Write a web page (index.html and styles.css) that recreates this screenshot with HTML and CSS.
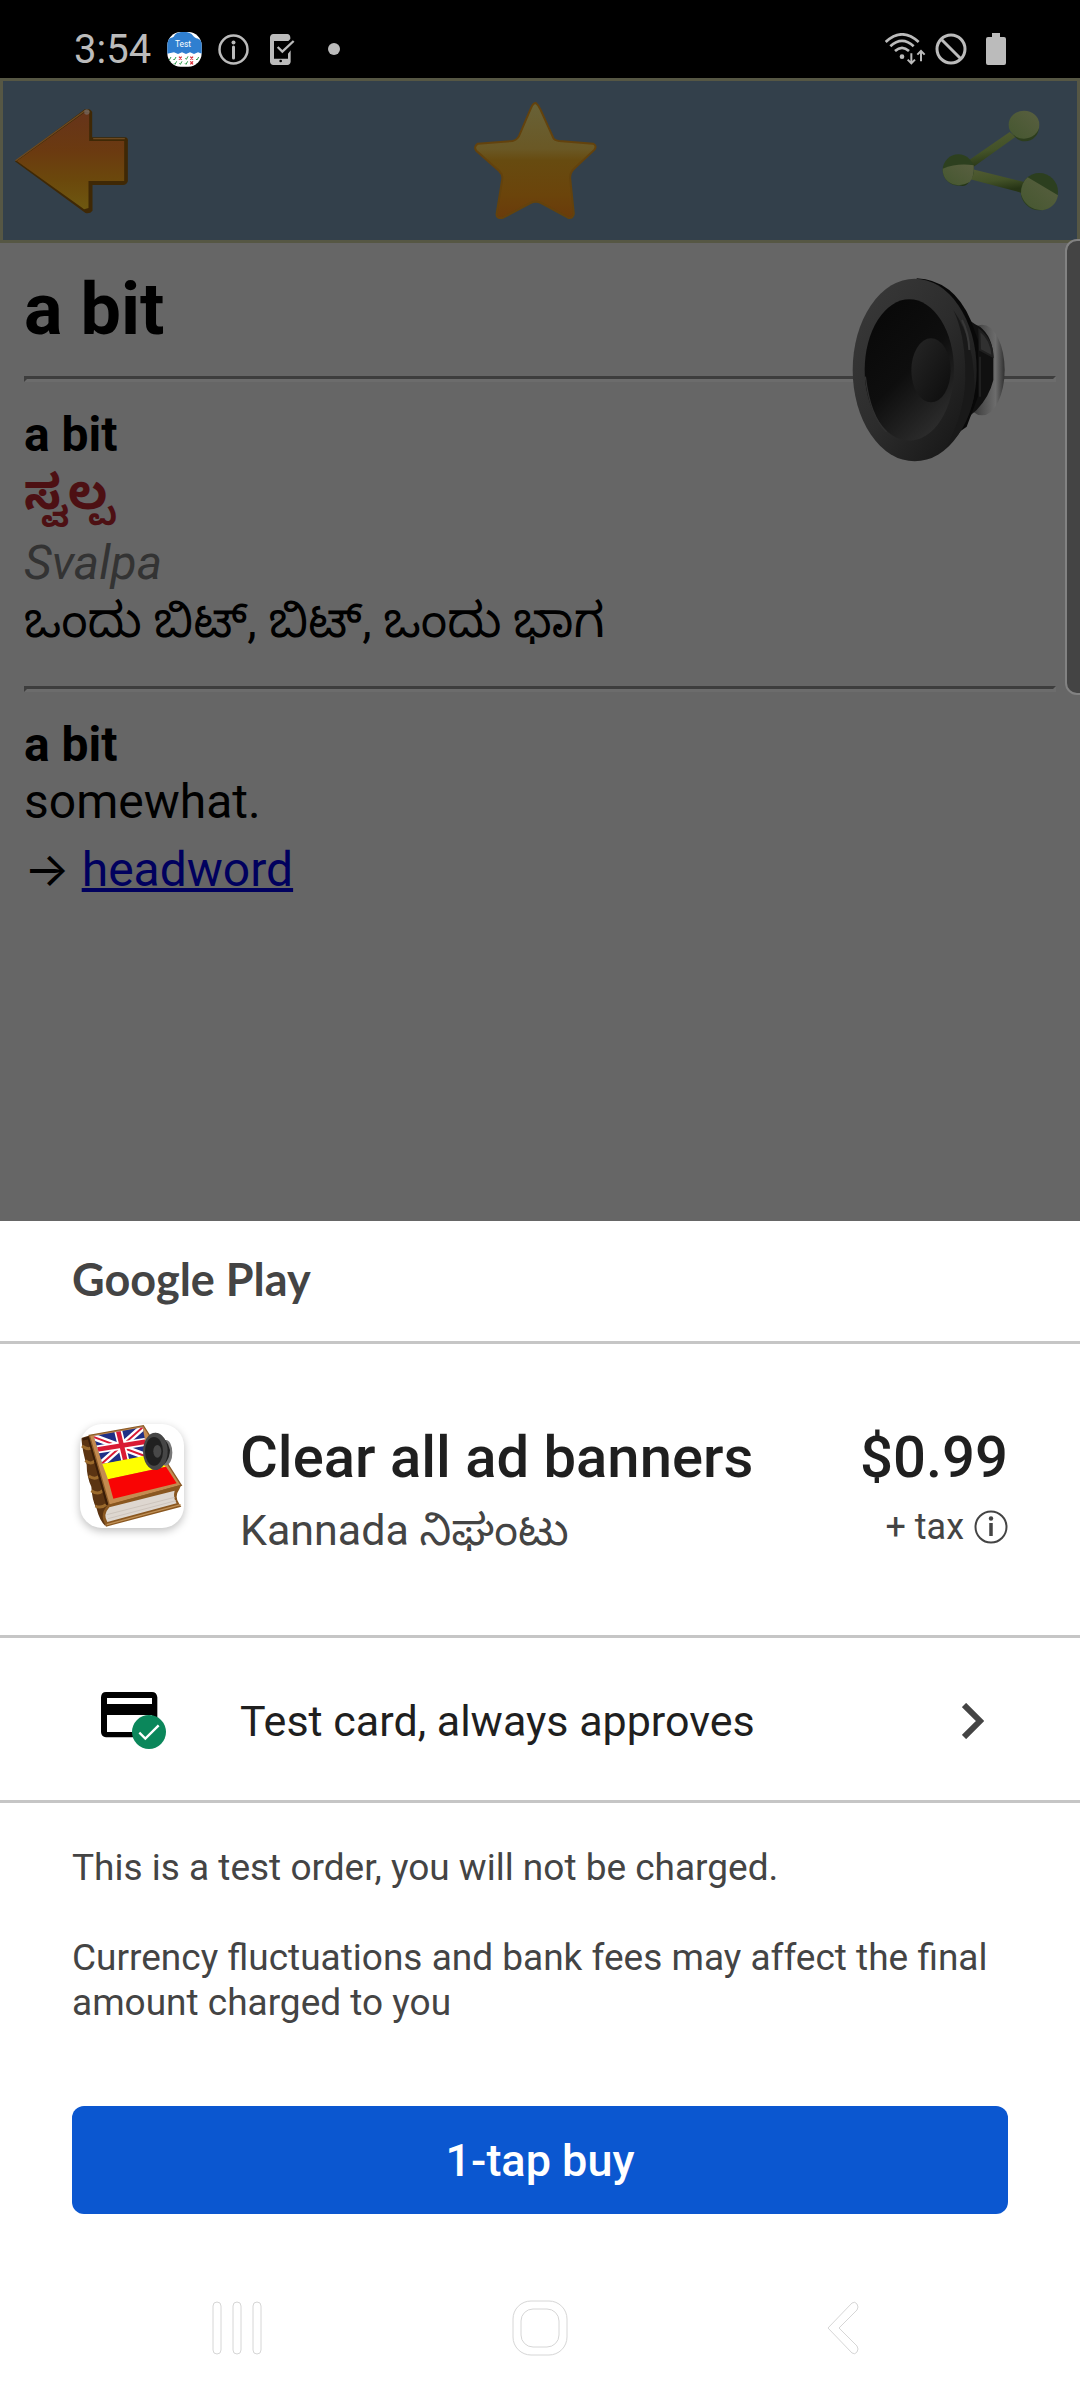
FILE: index.html
```html
<!DOCTYPE html>
<html lang="en">

<head>
    <meta charset="UTF-8">
    <meta name="viewport" content="width=device-width, initial-scale=1.0">
    <title>Kannada Dictionary</title>
    <link rel="stylesheet" href="styles.css">
</head>

<body>
    <div class="statusbar">
        <span class="clock">3:54</span>
        <svg width="35" height="35" viewBox="499 95 105 105">
            <clipPath id="badge"><rect x="500" y="95" width="103" height="104" rx="40" /></clipPath>
            <g clip-path="url(#badge)">
                <rect x="499" y="95" width="105" height="105" fill="#fff" />
                <path d="M499 160V122C506 108 518 117 522 104C530 92 566 90 576 105C584 118 598 112 604 126V160L592 156 580 161 568 156 556 161 544 156 532 161 520 156Z" fill="#2f7fd0" />
                <text x="547" y="141" class="badge-text">Test</text>
                <path d="M503 176l3 3 5-9M518 176l3 3 5-9M554 174l3 3 5-9M586 176l3 3 5-9M502 189l3 3 5-9M520 189l3 3 5-9M536 189l3 3 5-9M553 189l3 3 5-9M588 189l3 3 5-9" fill="none" stroke="#2c9a4b" stroke-width="3" />
                <path d="M535 169l8 9m0-9l-8 9M569 169l8 9m0-9l-8 9M569 183l8 9m0-9l-8 9" stroke="#d8303a" stroke-width="4" />
            </g>
        </svg>
        <svg width="31" height="31" viewBox="0 0 31 31">
            <circle cx="15.500" cy="15.500" r="14" fill="none" stroke="#bbb" stroke-width="2.500" />
            <path d="M15.500 13v11" stroke="#bbb" stroke-width="3" stroke-linecap="round" />
            <circle cx="15.500" cy="8.500" r="2" fill="#bbb" />
        </svg>
        <svg width="35" height="31" viewBox="797 101 105 93">
            <path d="M822 101H864Q872 102 873 111V116L867 122H824V175H866V160L874 150V184Q873 193 864 194H822Q813 193 812 184V111Q813 102 822 101Z" fill="#bbb" />
            <path d="M835 140L849 154 883 122" fill="none" stroke="#bbb" stroke-width="7" />
            <circle cx="844" cy="182" r="4" fill="#000" />
        </svg>
        <span class="dot"></span>
        <div class="status-right">
            <svg width="41" height="32" viewBox="135 99 123 96">
                <g fill="none" stroke="#bbb" stroke-width="8">
                    <path d="M137 126Q186 80 236 126" />
                    <path d="M151 139Q186 106 221 139" />
                    <path d="M165 153Q186 134 207 153" />
                    <path d="M214 160V188M203 179L214 190 225 179M243 184V154M232 164L243 153 254 164" stroke-width="6" />
                </g>
                <circle cx="186" cy="170" r="7" fill="#bbb" />
            </svg>
            <svg width="32" height="32" viewBox="0 0 32 32">
                <circle cx="16" cy="16" r="14" fill="none" stroke="#bbb" stroke-width="3" />
                <path d="M6 6L26 26" stroke="#bbb" stroke-width="3" />
            </svg>
            <svg class="battery" width="20" height="32" viewBox="0 0 20 32">
                <path d="M6 0h8v4h4q2 0 2 2v24q0 2-2 2H2q-2 0-2-2V6q0-2 2-2h4Z" fill="#bbb" />
            </svg>
        </div>
    </div>

    <header class="toolbar">
        <button type="button" aria-label="Back">
            <svg width="115" height="106" viewBox="40 320 344 318">
                <defs>
                    <linearGradient id="arrow" x1="0" y1="0" x2="0" y2="1">
                        <stop offset="0" stop-color="#66341a" />
                        <stop offset="0.4" stop-color="#6b3a10" />
                        <stop offset="0.7" stop-color="#6b480c" />
                        <stop offset="1" stop-color="#6e5810" />
                    </linearGradient>
                </defs>
                <path d="M42 480L252 324Q268 320 274 332V408H374Q383 410 381 422V540Q378 551 366 551H275V628Q268 638 254 635Z" fill="#3f2805" />
                <path d="M48 479L250 334 265 336V419H370V539H263V620L250 624Z" fill="url(#arrow)" />
                <path d="M44 478L252 328 266 332M277 412H372" fill="none" stroke="#6d4a22" stroke-width="4" />
                <circle cx="258" cy="332" r="8" fill="#75665c" opacity="0.8" />
            </svg>
        </button>
        <button type="button" aria-label="Favorite">
            <svg width="125" height="120" viewBox="222 86 374 360">
                <defs>
                    <linearGradient id="star" x1="0" y1="0" x2="0" y2="1">
                        <stop offset="0" stop-color="#686238" />
                        <stop offset="0.4" stop-color="#6a5825" />
                        <stop offset="0.5" stop-color="#674b10" />
                        <stop offset="0.8" stop-color="#6b440b" />
                        <stop offset="1" stop-color="#6a3b0b" />
                    </linearGradient>
                </defs>
                <path d="M410 92Q418 98 424 112L462 196Q464 203 480 206L582 214Q594 220 586 232L524 290Q512 302 513 318L524 424Q522 440 506 436L426 392Q410 384 394 392L312 436Q292 440 292 426L309 322Q312 308 300 296L232 236Q222 224 236 214L340 206Q354 203 360 190L396 106Q402 92 410 92Z" fill="url(#star)" stroke="#63420d" stroke-width="6" />
            </svg>
        </button>
        <button type="button" aria-label="Share">
            <svg width="117" height="102" viewBox="303 324 351 306">
                <defs>
                    <linearGradient id="stem" x1="0" y1="0" x2="0.3" y2="1">
                        <stop offset="0" stop-color="#535c34" />
                        <stop offset="0.6" stop-color="#435228" />
                        <stop offset="1" stop-color="#263415" />
                    </linearGradient>
                    <linearGradient id="ball" x1="0" y1="1" x2="1" y2="0">
                        <stop offset="0" stop-color="#455730" />
                        <stop offset="1" stop-color="#595f40" />
                    </linearGradient>
                </defs>
                <ellipse cx="365" cy="512" rx="27" ry="40" fill="#263617" />
                <path d="M376 480L506 390 524 404 394 497Z" fill="url(#stem)" />
                <path d="M380 498L550 540 540 572 382 530Z" fill="url(#stem)" />
                <ellipse cx="552" cy="374" rx="42" ry="44" fill="#2d3e1d" />
                <ellipse cx="549" cy="368" rx="46" ry="42" fill="url(#ball)" />
                <circle cx="352" cy="504" r="47" fill="#2d401f" />
                <path d="M305 500Q350 482 398 490Q400 526 386 540Q350 560 320 538Q304 522 305 500Z" fill="url(#ball)" />
                <circle cx="595" cy="569" r="56" fill="#2c3f1f" />
                <path d="M560 526L651 580Q644 618 604 625Q554 622 540 576Q540 542 560 526Z" fill="url(#ball)" />
            </svg>
        </button>
    </header>

    <main class="entry">
        <h1>a bit</h1>
        <hr>
        <p class="word">a bit</p>
        <p class="kannada translation" lang="kn">ಸ್ವಲ್ಪ</p>
        <p class="translit">Svalpa</p>
        <p class="kannada" lang="kn">ಒಂದು ಬಿಟ್, ಬಿಟ್, ಒಂದು ಭಾಗ</p>
        <hr>
        <p class="word">a bit</p>
        <p>somewhat.</p>
        <p class="see-also"><span class="arrow">→</span> <a href="#headword">headword</a></p>

        <button type="button" class="speaker" aria-label="Listen">
            <svg width="154" height="184" viewBox="96 144 462 552">
                <defs>
                    <linearGradient id="magnet" x1="0" y1="0" x2="1" y2="0">
                        <stop offset="0" stop-color="#111" />
                        <stop offset="0.5" stop-color="#4e4e4e" />
                        <stop offset="0.8" stop-color="#6c6c6c" />
                        <stop offset="1" stop-color="#303030" />
                    </linearGradient>
                    <linearGradient id="rim" x1="0" y1="0" x2="1" y2="1">
                        <stop offset="0" stop-color="#3a3a3a" />
                        <stop offset="0.5" stop-color="#2c2c2c" />
                        <stop offset="1" stop-color="#121212" />
                    </linearGradient>
                    <linearGradient id="cone" x1="0.2" y1="0" x2="0.8" y2="1">
                        <stop offset="0" stop-color="#080808" />
                        <stop offset="0.5" stop-color="#0e0e0e" />
                        <stop offset="1" stop-color="#303030" />
                    </linearGradient>
                    <linearGradient id="cap" x1="0" y1="0" x2="1" y2="1">
                        <stop offset="0" stop-color="#262626" />
                        <stop offset="1" stop-color="#0c0c0c" />
                    </linearGradient>
                </defs>
                <ellipse cx="486" cy="420" rx="68" ry="136" fill="url(#magnet)" />
                <path d="M400 220Q450 280 480 290Q518 320 520 380V450Q508 500 470 540L400 600Z" fill="#101010" />
                <path d="M478 300Q516 330 518 380L480 360ZM480 380V500" fill="#303030" stroke="#1f1f1f" stroke-width="6" />
                <path d="M290 145Q400 150 452 270L474 330V500L440 590L300 690Z" fill="#080808" />
                <ellipse cx="284" cy="420" rx="186" ry="274" fill="url(#rim)" />
                <path d="M400 240Q470 340 462 500Q440 600 380 650Q440 540 436 420Q434 310 400 240Z" fill="#191919" />
                <path d="M426 270Q446 310 448 360" fill="none" stroke="#383838" stroke-width="6" />
                <ellipse cx="268" cy="420" rx="134" ry="212" fill="url(#cone)" />
                <path d="M136 440Q150 560 200 606" fill="none" stroke="#303030" stroke-width="4" />
                <ellipse cx="333" cy="421" rx="59" ry="96" fill="url(#cap)" />
            </svg>
        </button>
        <div class="edge-panel"></div>
    </main>

    <section class="sheet">
        <div class="brand">Google Play</div>

        <div class="product">
            <div class="lead">
                <svg class="app-icon" width="104" height="104" viewBox="242 642 312 312">
                    <defs>
                        <clipPath id="flag"><path d="M283 678L430 652 446 740 309 761Z" /></clipPath>
                    </defs>
                    <path d="M246 684L272 676 330 886 318 948Q300 930 292 896Q278 872 276 830Q262 800 262 764Q250 730 246 684Z" fill="#5b3412" />
                    <path d="M248 708Q268 722 276 712M258 752Q276 766 286 752M268 798Q286 810 298 800M276 842Q296 856 310 842M288 888Q306 896 320 884" fill="none" stroke="#9b6a2c" stroke-width="9" />
                    <path d="M250 688L268 684 324 884" fill="none" stroke="#3a1d08" stroke-width="7" />
                    <path d="M270 676L432 647 546 826 330 886Z" fill="#c48b50" stroke="#8c5c28" stroke-width="4" />
                    <path d="M326 884L546 824 540 838Q524 860 540 882L546 890 320 950 314 936Q302 910 326 884Z" fill="#8a5720" />
                    <path d="M330 892L526 842Q520 862 532 880L324 936Q310 914 330 892Z" fill="#ded7d0" />
                    <path d="M322 914L526 862M326 926L530 872" stroke="#cdc4bc" stroke-width="3" />
                    <path d="M322 944L544 884" stroke="#c09158" stroke-width="4" />
                    <g clip-path="url(#flag)">
                        <path d="M280 650H450V765H280Z" fill="#1f2f86" />
                        <path d="M280 680L448 742M430 652L306 762" stroke="#fff" stroke-width="20" />
                        <path d="M280 680L448 742M430 652L306 762" stroke="#d91a34" stroke-width="6" />
                        <path d="M356 660L380 760M284 720L446 694" stroke="#fff" stroke-width="24" />
                        <path d="M356 660L380 760M284 720L446 694" stroke="#d91a34" stroke-width="14" />
                    </g>
                    <path d="M309 762L446 736 500 770 326 808Z" fill="#ff0" />
                    <path d="M326 808L500 770 532 820 342 866Z" fill="#f90404" />
                    <ellipse cx="500" cy="728" rx="19" ry="38" fill="#777" />
                    <path d="M468 668Q500 676 512 720Q510 762 470 780Z" fill="#222" />
                    <ellipse cx="468" cy="724" rx="37" ry="56" fill="#464646" />
                    <ellipse cx="464" cy="724" rx="27" ry="43" fill="#202020" />
                    <ellipse cx="474" cy="724" rx="12" ry="19" fill="#484848" />
                </svg>
            </div>
            <div class="product-text">
                <h2>Clear all ad banners</h2>
                <p>Kannada <span lang="kn">ನಿಘಂಟು</span></p>
            </div>
            <div class="price">
                <strong>$0.99</strong>
                <p>
                    + tax
                    <button type="button" aria-label="Tax details">
                        <svg width="34" height="34" viewBox="0 0 34 34">
                            <circle cx="17" cy="17" r="15.500" fill="none" stroke="#444" stroke-width="2" />
                            <path d="M17 13v13" stroke="#444" stroke-width="3.500" />
                            <circle cx="17" cy="8.500" r="2.200" fill="#444" />
                        </svg>
                    </button>
                </p>
            </div>
        </div>

        <button type="button" class="payment">
            <span class="lead">
                <svg width="65" height="57" viewBox="123 108 195 171">
                    <path d="M138 108H276Q290 108 292 124V228Q290 243 276 244H138Q124 243 123 228V124Q124 108 138 108ZM141 126V144H276V126ZM141 177V228H276V177Z" fill="#000" fill-rule="evenodd" />
                    <circle cx="267" cy="228" r="51" fill="#0b875b" />
                    <path d="M238 230L256 248 296 208" fill="none" stroke="#fff" stroke-width="7" />
                </svg>
            </span>
            <span class="payment-name">Test card, always approves</span>
            <svg class="chevron" width="22" height="36" viewBox="0 0 22 36">
                <path d="M2 2L18 18 2 34" fill="none" stroke="#444" stroke-width="6" />
            </svg>
        </button>

        <div class="checkout">
            <p>This is a test order, you will not be charged.</p>
            <p>Currency fluctuations and bank fees may affect the final amount charged to you</p>
            <button type="button" class="buy">1-tap buy</button>
        </div>

        <nav class="navbar">
            <button type="button" aria-label="Recent apps">
                <svg width="50" height="54" viewBox="0 0 50 54" fill="none" stroke="#d6d6d6">
                    <rect x="1" y="1" width="8" height="52" rx="4" />
                    <rect x="21" y="1" width="8" height="52" rx="4" />
                    <rect x="41" y="1" width="8" height="52" rx="4" />
                </svg>
            </button>
            <button type="button" aria-label="Home">
                <svg width="56" height="56" viewBox="0 0 56 56" fill="none" stroke="#d6d6d6">
                    <rect x="1" y="1" width="54" height="54" rx="18" />
                    <rect x="9" y="9" width="38" height="38" rx="12" />
                </svg>
            </button>
            <button type="button" aria-label="Back">
                <svg width="32" height="54" viewBox="0 0 32 54" fill="none" stroke="#d6d6d6">
                    <path d="M1 27L25 2Q28 0 30 3Q32 6 30 9L12 27 30 45Q32 48 30 51Q28 54 25 52Z" />
                </svg>
            </button>
        </nav>
    </section>
</body>

</html>
```
FILE: styles.css
```css
* {
    box-sizing: border-box;
}

html {
    overflow-x: hidden;
}

body {
    margin: 0;
    min-height: 100vh;
    display: flex;
    flex-direction: column;
    background-color: #666;
    font-family: Roboto, "Noto Sans Kannada", sans-serif;
}

h1,
h2,
p {
    margin: 0;
}

svg {
    display: block;
    flex-shrink: 0;
}

button {
    border: 0;
    padding: 0;
    background: none;
    color: inherit;
    font: inherit;
    cursor: pointer;
}

/* status bar */
.statusbar {
    height: 78px;
    padding: 20px 74px 0;
    display: flex;
    align-items: center;
    background-color: #000;
    color: #bbb;
}

.clock {
    font-size: 40px;
    margin-right: 16px;
}

.statusbar > svg {
    margin-right: 16px;
}

.badge-text {
    font-size: 25px;
    fill: #fff;
    text-anchor: middle;
}

.dot {
    width: 12px;
    height: 12px;
    margin-left: 12px;
    border-radius: 50%;
    background-color: #bbb;
}

.status-right {
    margin-left: auto;
    display: flex;
    gap: 9px;
}

.battery {
    margin-left: 10px;
}

/* toolbar */
.toolbar {
    height: 165px;
    padding: 0 18px 0 11px;
    display: flex;
    align-items: center;
    justify-content: space-between;
    background-color: #33404b;
    border: 3px solid #565744;
}

/* dictionary entry */
.entry {
    position: relative;
    flex: 1;
    padding: 24px;
    font-size: 48px;
    line-height: 57px;
    color: #000;
}

.entry h1 {
    font-size: 72px;
    line-height: 85px;
}

.entry hr {
    margin: 24px 0;
    border: 3px solid;
    border-color: #3d3d3d #6c6c6c #6c6c6c #3d3d3d;
}

.word {
    font-weight: bold;
}

.entry .kannada {
    margin-bottom: 12px;
    line-height: 59px;
}

.translation {
    color: #4d1013;
    font-weight: bold;
}

.translit {
    color: #333;
    font-style: italic;
}

.entry .kannada + hr {
    margin-top: 36px;
}

.entry .see-also {
    line-height: 78px;
}

.arrow {
    font-family: Inter, sans-serif;
}

.entry a {
    color: #00005e;
    text-decoration-thickness: 4px;
}

.speaker {
    position: absolute;
    top: 35px;
    right: 74px;
}

.edge-panel {
    position: absolute;
    top: -4px;
    right: -4px;
    width: 19px;
    height: 456px;
    border: 2px solid #828282;
    border-radius: 12px 0 0 12px;
    background-color: #444;
}

/* purchase sheet */
.sheet {
    background-color: #fff;
    color: #444;
}

.brand {
    height: 123px;
    padding: 0 72px;
    border-bottom: 3px solid #c6c6c6;
    font-family: Lato, sans-serif;
    font-size: 45px;
    font-weight: bold;
    line-height: 116px;
}

.product {
    display: flex;
    align-items: flex-start;
    padding: 80px 72px 65px;
    border-bottom: 3px solid #c6c6c6;
}

.lead {
    width: 168px;
    flex-shrink: 0;
}

.app-icon {
    margin: 0 8px;
    border-radius: 22px;
    background-color: #fff;
    box-shadow: 0 3px 8px rgba(0, 0, 0, .25);
}

.product-text {
    flex: 1;
    font-size: 43px;
    line-height: 80px;
}

.product h2,
.price strong {
    color: #1f1f1f;
    font-size: 58px;
    font-weight: 500;
    line-height: 66px;
}

.price {
    text-align: right;
    font-size: 36px;
}

.price strong {
    display: block;
}

.price p {
    display: flex;
    align-items: center;
    justify-content: flex-end;
    gap: 10px;
    line-height: 74px;
}

.payment {
    width: 100%;
    height: 165px;
    padding: 3px 72px 0;
    display: flex;
    align-items: center;
    border-bottom: 3px solid #c6c6c6;
    text-align: left;
    font-size: 43px;
    color: #1f1f1f;
}

.payment svg {
    margin: 0 29px;
}

.payment-name {
    flex: 1;
}

.payment .chevron {
    margin: 0 24px;
}

.checkout {
    padding: 42px 72px;
    font-size: 37px;
    line-height: 45px;
}

.checkout p {
    margin-bottom: 45px;
}

.buy {
    display: block;
    width: 100%;
    height: 108px;
    margin-top: 81px;
    border-radius: 12px;
    background-color: #0b57d0;
    color: #fff;
    font-size: 45px;
    font-weight: 500;
}

/* system navigation */
.navbar {
    display: grid;
    grid-template-columns: repeat(3, 1fr);
    height: 144px;
    padding: 0 86px;
}

.navbar button {
    display: flex;
    align-items: center;
    justify-content: center;
}
```
